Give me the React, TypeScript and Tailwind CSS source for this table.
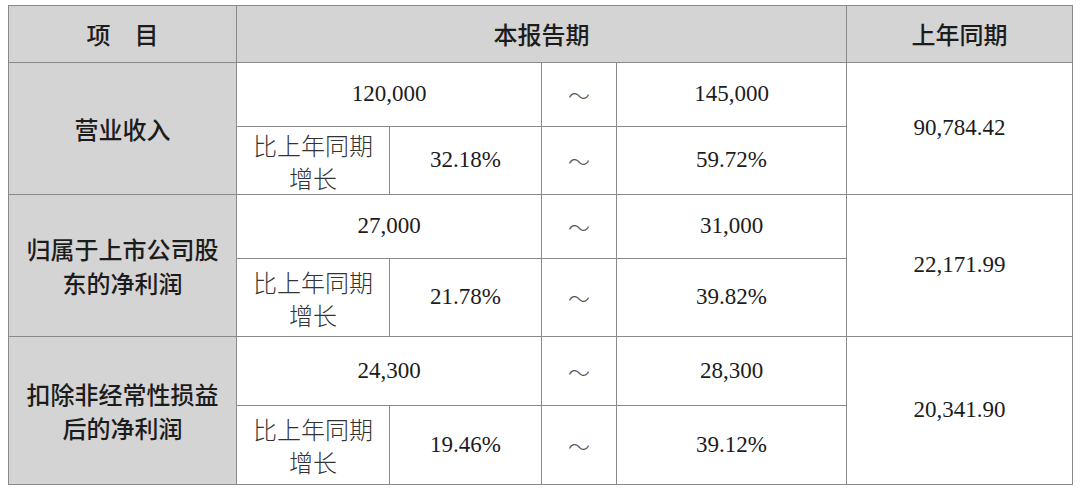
const CJK = "font-['Noto_Sans_CJK_SC','Noto_Sans',sans-serif]"
const NUM = "font-['Liberation_Serif','Times_New_Roman',serif]"

type Block = {
  label: string[]
  low: string
  high: string
  pctLow: string
  pctHigh: string
  last: string
  hA: string
  hB: string
}

const BLOCKS: Block[] = [
  { label: ['营业收入'], low: '120,000', high: '145,000', pctLow: '32.18%', pctHigh: '59.72%', last: '90,784.42', hA: 'h-[64px]', hB: 'h-[68px]' },
  { label: ['归属于上市公司股', '东的净利润'], low: '27,000', high: '31,000', pctLow: '21.78%', pctHigh: '39.82%', last: '22,171.99', hA: 'h-[64px]', hB: 'h-[78px]' },
  { label: ['扣除非经常性损益', '后的净利润'], low: '24,300', high: '28,300', pctLow: '19.46%', pctHigh: '39.12%', last: '20,341.90', hA: 'h-[69px]', hB: 'h-[79px]' },
]

const cell = 'border border-[#8a8a8a] text-center align-middle p-0'
const gray = 'bg-[#d4d4d4]'

function Tilde() {
  return <span className={`${CJK} text-[22px] font-light text-[#555]`}>～</span>
}

export default function App() {
  return (
    <div className="min-h-[491px] w-[1080px] bg-white pl-[8px] pt-[5px]">
      <table className="w-[1064px] table-fixed border-collapse text-[#1c1c1c]">
        <colgroup>
          <col className="w-[228px]" />
          <col className="w-[153px]" />
          <col className="w-[152px]" />
          <col className="w-[75px]" />
          <col className="w-[230px]" />
          <col className="w-[226px]" />
        </colgroup>
        <thead>
          <tr className="h-[57px]">
            <th className={`${cell} ${gray} ${CJK} text-[24px] font-medium`}>
              项<span className="inline-block w-[24px]" />目
            </th>
            <th colSpan={4} className={`${cell} ${gray} ${CJK} text-[24px] font-medium`}>
              本报告期
            </th>
            <th className={`${cell} ${gray} ${CJK} text-[24px] font-medium`}>上年同期</th>
          </tr>
        </thead>
        <tbody>
          {BLOCKS.map((b) => (
            <Rows key={b.last} b={b} />
          ))}
        </tbody>
      </table>
    </div>
  )
}

function Rows({ b }: { b: Block }) {
  return (
    <>
      <tr className={b.hA}>
        <td rowSpan={2} className={`${cell} ${gray} ${CJK} text-[24px] font-medium leading-[34px]`}>
          {b.label.map((l) => (
            <div key={l}>{l}</div>
          ))}
        </td>
        <td colSpan={2} className={`${cell} ${NUM} text-[23px]`}>
          {b.low}
        </td>
        <td className={cell}>
          <Tilde />
        </td>
        <td className={`${cell} ${NUM} text-[23px]`}>{b.high}</td>
        <td rowSpan={2} className={`${cell} ${NUM} text-[23px]`}>
          {b.last}
        </td>
      </tr>
      <tr className={b.hB}>
        <td className={`${cell} ${CJK} text-[24px] font-light leading-[33px] text-[#333]`}>
          <div>比上年同期</div>
          <div>增长</div>
        </td>
        <td className={`${cell} ${NUM} text-[23px]`}>{b.pctLow}</td>
        <td className={cell}>
          <Tilde />
        </td>
        <td className={`${cell} ${NUM} text-[23px]`}>{b.pctHigh}</td>
      </tr>
    </>
  )
}
